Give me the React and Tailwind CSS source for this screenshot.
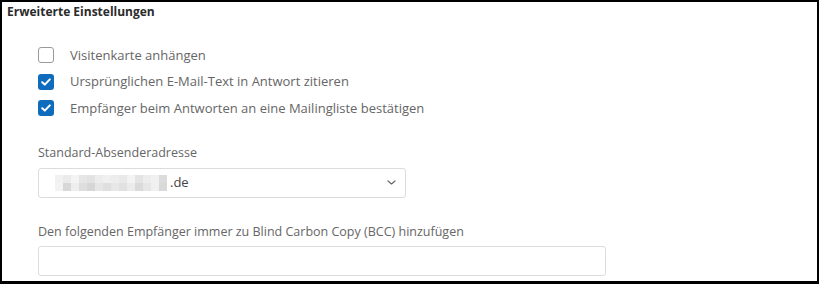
import { useState } from 'react';

const font = { fontFamily: '"Open Sans", "Noto Sans", sans-serif' };

const Checkbox = ({ checked, label, onChange }) => (
  <label className="flex items-center h-[26.5px] cursor-pointer">
    <span
      onClick={onChange}
      className={`w-4 h-4 rounded-[3px] flex items-center justify-center ${
        checked ? 'bg-[#0f6cbd]' : 'border border-[#9a9a9a] bg-white'
      }`}
    >
      {checked && (
        <svg width="10" height="8" viewBox="0 0 10 8" fill="none">
          <path d="M1.2 4.2 3.8 6.6 8.8 1.4" stroke="white" strokeWidth="2" strokeLinecap="round" strokeLinejoin="round" />
        </svg>
      )}
    </span>
    <span className="ml-4 text-[13px] text-[#666]">{label}</span>
  </label>
);

const Blur = () => {
  // pixelated/blurred mail address
  const top = ['#f1f1f1', '#ebebeb', '#f4f4f4', '#e6e6e6', '#e2e2e2', '#ececec', '#f0f0f0', '#ededed', '#e9e9e9', '#f3f3f3', '#e4e4e4', '#ededed', '#f1f1f1', '#dcdcdc'];
  const bottom = ['#f3f3f3', '#d8d8d8', '#eeeeee', '#dedede', '#d6d6d6', '#e6e6e6', '#dfdfdf', '#e7e7e7', '#e1e1e1', '#ebebeb', '#dadada', '#e6e6e6', '#f0f0f0', '#d9d9d9'];
  return (
    <div className="flex flex-col">
      <div className="flex">
        {top.map((c, i) => (
          <div key={i} className="w-2 h-[8px]" style={{ backgroundColor: c }} />
        ))}
      </div>
      <div className="flex">
        {bottom.map((c, i) => (
          <div key={i} className="w-2 h-[8px]" style={{ backgroundColor: c }} />
        ))}
      </div>
    </div>
  );
};

export default function App() {
  const [boxes, setBoxes] = useState([false, true, true]);
  const labels = [
    'Visitenkarte anhängen',
    'Ursprünglichen E-Mail-Text in Antwort zitieren',
    'Empfänger beim Antworten an eine Mailingliste bestätigen',
  ];
  const toggle = (i) => setBoxes((b) => b.map((v, j) => (j === i ? !v : v)));

  return (
    <div className="w-[819px] h-[284px] bg-white overflow-hidden" style={font}>
      <div className="h-full border-t-2 border-l-2 border-r-2 border-b-[3px] border-black">
        <div className="pl-[5px] pt-[1px] text-[12px] font-bold text-[#2b2b2b] leading-[18px]">
          Erweiterte Einstellungen
        </div>

        <div className="pl-[36px] pt-[21px]">
          {labels.map((l, i) => (
            <Checkbox key={i} checked={boxes[i]} label={l} onChange={() => toggle(i)} />
          ))}

          <div className="mt-[22px] text-[12.5px] text-[#666] leading-[18px]">Standard-Absenderadresse</div>
          <div className="mt-[6px] w-[368px] h-[30px] border border-[#dcdcdc] rounded-[3px] flex items-center pl-4 pr-[9px]">
            <Blur />
            <span className="text-[13px] text-[#444] ml-[3px]">.de</span>
            <svg className="ml-auto" width="9" height="5" viewBox="0 0 9 5" fill="none">
              <path d="M1 1 4.5 4 8 1" stroke="#666" strokeWidth="1.2" strokeLinecap="round" strokeLinejoin="round" />
            </svg>
          </div>

          <div className="mt-[25px] text-[12.5px] text-[#666] leading-[18px]">
            Den folgenden Empfänger immer zu Blind Carbon Copy (BCC) hinzufügen
          </div>
          <input
            className="mt-[5px] w-[568px] h-[30px] border border-[#dcdcdc] rounded-[3px] outline-none px-2 text-[13px]"
            type="text"
          />
        </div>
      </div>
    </div>
  );
}
